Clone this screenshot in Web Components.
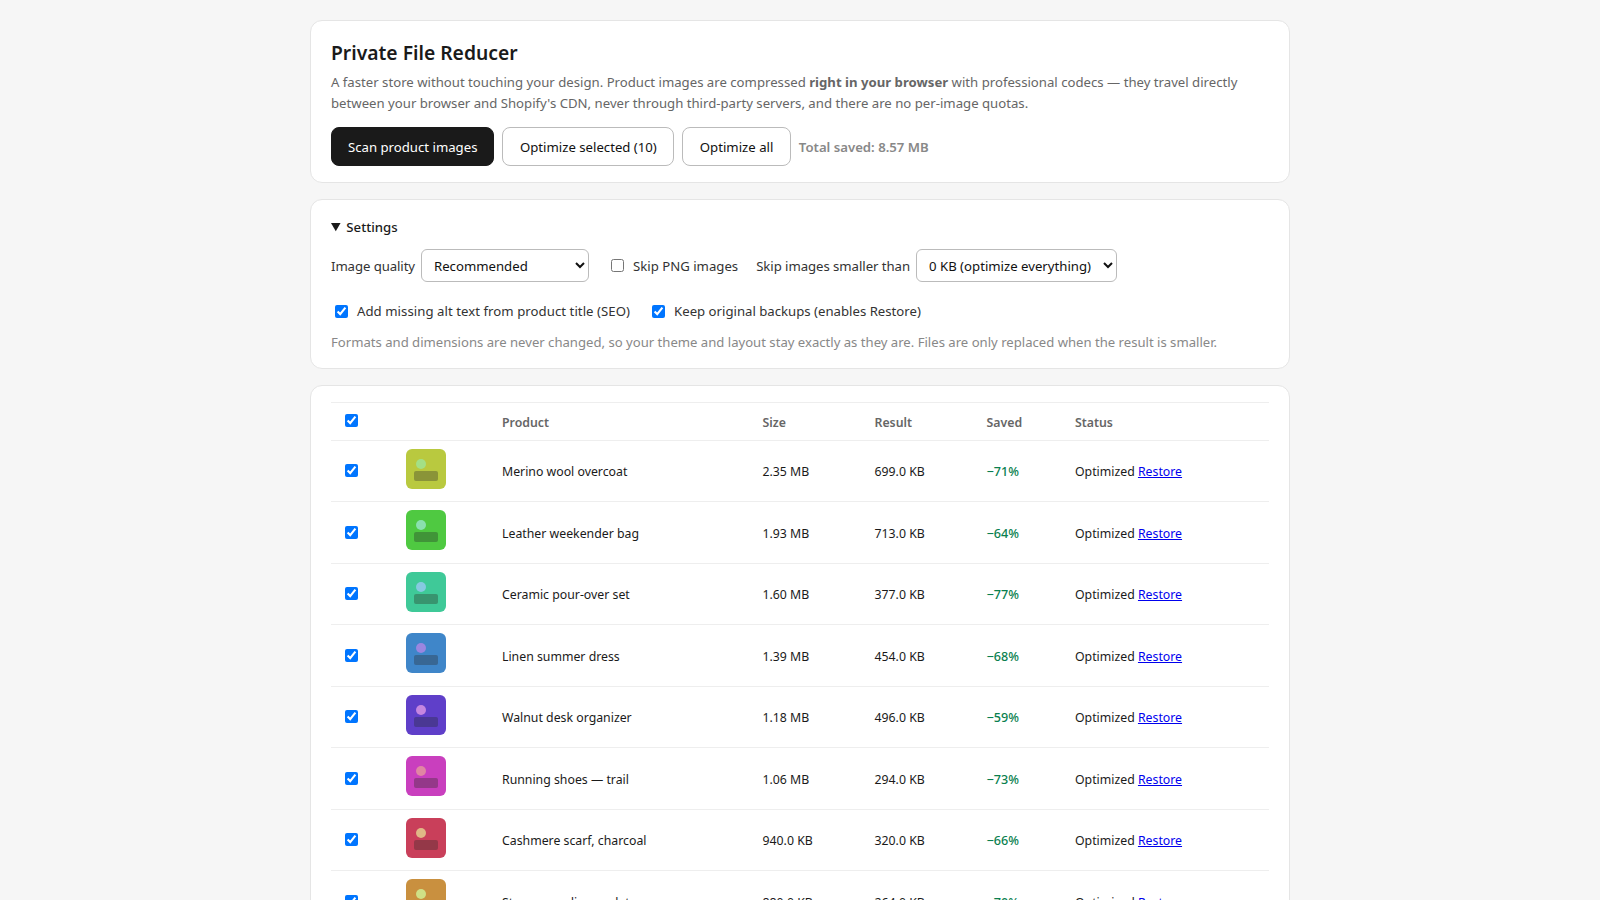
<!DOCTYPE html>
<html lang="en">
<head>
<meta charset="utf-8">
<title>Private File Reducer</title>
<style>
  html, body { margin: 0; background: #f6f6f6; }
  body {
    padding: 20px;
    color: #1a1a1a;
    font: 13.18px/21px "Noto Sans", "Open Sans", sans-serif;
  }
  main { display: block; width: 980px; margin: 0 auto; }
</style>
</head>
<body>
<main>
  <app-card>
    <h-title>Private File Reducer</h-title>
    <intro-text>A faster store without touching your design. Product images are compressed <b>right in your browser</b> with professional codecs — they travel directly between your browser and Shopify's CDN, never through third-party servers, and there are no per-image quotas.</intro-text>
    <action-bar>
      <ui-button variant="primary">Scan product images</ui-button>
      <ui-button>Optimize selected (10)</ui-button>
      <ui-button>Optimize all</ui-button>
      <total-saved>Total saved: 8.57 MB</total-saved>
    </action-bar>
  </app-card>

  <app-card>
    <settings-panel></settings-panel>
  </app-card>

  <app-card>
    <table-head></table-head>
    <product-row name="Merino wool overcoat" size="2.35 MB" result="699.0 KB" saved="−71%" bg="#b9c93f" dot="#a3e086" bar="#8a9438"></product-row>
    <product-row name="Leather weekender bag" size="1.93 MB" result="713.0 KB" saved="−64%" bg="#4fc941" dot="#8ae0ae" bar="#409438"></product-row>
    <product-row name="Ceramic pour-over set" size="1.60 MB" result="377.0 KB" saved="−77%" bg="#3fc998" dot="#86c9e0" bar="#38946f"></product-row>
    <product-row name="Linen summer dress" size="1.39 MB" result="454.0 KB" saved="−68%" bg="#3f86c9" dot="#9a86e0" bar="#386794"></product-row>
    <product-row name="Walnut desk organizer" size="1.18 MB" result="496.0 KB" saved="−59%" bg="#5f3fc9" dot="#c686e0" bar="#4a3894"></product-row>
    <product-row name="Running shoes — trail" size="1.06 MB" result="294.0 KB" saved="−73%" bg="#c93fbe" dot="#e086a3" bar="#943889"></product-row>
    <product-row name="Cashmere scarf, charcoal" size="940.0 KB" result="320.0 KB" saved="−66%" bg="#c93f5a" dot="#e0b886" bar="#943848"></product-row>
    <product-row name="Stoneware dinner plates" size="880.0 KB" result="264.0 KB" saved="−70%" bg="#c9903f" dot="#cfe086" bar="#946d38"></product-row>
  </app-card>
</main>

<script>
// small helper, every element below is a shadow root plus a style block
function shadow(el, html) {
  el.attachShadow({ mode: 'open' });
  el.shadowRoot.innerHTML = html;
}

class AppCard extends HTMLElement {
  constructor() {
    super();
    shadow(this, `
      <style>
        :host {
          display: block;
          background: #fff;
          border: 1px solid #e5e5e5;
          border-radius: 12px;
          padding: 16px 20px;
          margin-bottom: 16px;
        }
      </style>
      <slot></slot>`);
  }
}

class HTitle extends HTMLElement {
  constructor() {
    super();
    shadow(this, `
      <style>
        :host { display: block; font-size: 19.3px; line-height: 32px; font-weight: 600; margin-bottom: 3px; }
      </style>
      <slot></slot>`);
  }
}

class IntroText extends HTMLElement {
  constructor() {
    super();
    shadow(this, `
      <style>
        :host { display: block; color: #666; margin-bottom: 13px; }
      </style>
      <slot></slot>`);
  }
}

class ActionBar extends HTMLElement {
  constructor() {
    super();
    shadow(this, `
      <style>
        :host { display: flex; align-items: center; gap: 8px; }
      </style>
      <slot></slot>`);
  }
}

class UiButton extends HTMLElement {
  constructor() {
    super();
    shadow(this, `
      <style>
        :host { display: block; }
        button {
          font: inherit;
          height: 39px;
          padding: 2px 16.5px 0;
          border: 1px solid #bbb;
          border-radius: 8px;
          background: #fff;
          color: #111;
        }
        :host([variant="primary"]) button {
          padding: 2px 16px 0;
          background: #1a1a1a;
          border-color: #1a1a1a;
          color: #fff;
        }
      </style>
      <button><slot></slot></button>`);
  }
}

class TotalSaved extends HTMLElement {
  constructor() {
    super();
    shadow(this, `
      <style>
        :host { display: block; color: #888; font-weight: 600; padding-top: 2px; }
      </style>
      <slot></slot>`);
  }
}

class SettingsPanel extends HTMLElement {
  constructor() {
    super();
    shadow(this, `
      <style>
        :host { display: block; }
        summary { font-weight: 500; cursor: pointer; height: 22px; line-height: 20px; margin-bottom: 11px; }
        summary::marker { font-size: 14.5px; }
        .row { display: flex; align-items: center; gap: 18px; }
        .row + .row { margin-top: 19px; }
        label { display: inline-flex; align-items: center; gap: 6px; color: #333; }
        label span { padding-top: 2px; }
        label span.tight { letter-spacing: -0.05px; }
        label span.tighter { letter-spacing: -0.08px; }
        label span.wide { letter-spacing: 0.05px; }
        .row + .row span { padding-top: 0; }
        select {
          font: inherit;
          height: 33px;
          padding: 0 8px;
          border: 1px solid #bbb;
          border-radius: 6px;
          background: #fff;
          color: #111;
        }
        input { width: 13px; height: 13px; margin: 3px 3px 3px 4px; accent-color: #0075ff; }
        p { color: #888; margin: 10px 0 -1px; font-size: 13.12px; }
      </style>
      <details open>
        <summary>Settings</summary>
        <div class="row">
          <label><span class="tighter">Image quality</span>
            <select style="width:168px"><option>Recommended</option></select>
          </label>
          <label><input type="checkbox"> <span>Skip PNG images</span></label>
          <label><span class="tight">Skip images smaller than</span>
            <select style="width:201px"><option>0 KB (optimize everything)</option></select>
          </label>
        </div>
        <div class="row">
          <label><input type="checkbox" checked> <span class="wide">Add missing alt text from product title (SEO)</span></label>
          <label><input type="checkbox" checked> <span>Keep original backups (enables Restore)</span></label>
        </div>
        <p>Formats and dimensions are never changed, so your theme and layout stay exactly as they are. Files are only replaced when the result is smaller.</p>
      </details>`);
  }
}

const COLUMNS = '65px 96px 260.5px 112px 112px 88.5px 1fr';

class TableHead extends HTMLElement {
  constructor() {
    super();
    shadow(this, `
      <style>
        :host {
          display: grid;
          grid-template-columns: ${COLUMNS};
          align-items: center;
          height: 38.5px;
          box-sizing: border-box;
          border-top: 1px solid #eee;
          border-bottom: 1px solid #eee;
          font-size: 12.3px;
          font-weight: 600;
          color: #666;
        }
        .cell { padding: 2px 10px 0; }
        .cell:first-child { padding-top: 0; }
        input { display: block; width: 13px; height: 13px; margin: 0 0 4px 4px; accent-color: #0075ff; }
      </style>
      <div class="cell"><input type="checkbox" checked></div>
      <div class="cell"></div>
      <div class="cell">Product</div>
      <div class="cell">Size</div>
      <div class="cell">Result</div>
      <div class="cell">Saved</div>
      <div class="cell">Status</div>`);
  }
}

class ProductRow extends HTMLElement {
  constructor() {
    super();
    const a = (n) => this.getAttribute(n);
    shadow(this, `
      <style>
        :host {
          display: grid;
          grid-template-columns: ${COLUMNS};
          align-items: center;
          height: 61.5px;
          box-sizing: border-box;
          border-bottom: 1px solid #eee;
          font-size: 12.3px;
        }
        .cell { padding: 2px 10px 0; }
        .cell:first-child { padding-top: 0; }
        input { display: block; width: 13px; height: 13px; margin: 0 0 2px 4px; accent-color: #0075ff; }
        .thumb-cell { align-self: start; padding-top: 8px; }
        .thumb {
          position: relative;
          width: 40px;
          height: 40px;
          border-radius: 6px;
          overflow: hidden;
          background: ${a('bg')};
        }
        .thumb i { position: absolute; display: block; }
        .dot { left: 10px; top: 10px; width: 10px; height: 10px; border-radius: 50%; background: ${a('dot')}; }
        .bar { left: 8px; top: 22px; width: 24px; height: 10px; border-radius: 2px; background: ${a('bar')}; }
        .saved { color: #0a7f4f; font-weight: 500; font-size: 12.6px; }
        a { color: #00e; }
      </style>
      <div class="cell"><input type="checkbox" checked></div>
      <div class="cell thumb-cell"><div class="thumb"><i class="dot"></i><i class="bar"></i></div></div>
      <div class="cell">${a('name')}</div>
      <div class="cell">${a('size')}</div>
      <div class="cell">${a('result')}</div>
      <div class="cell saved">${a('saved')}</div>
      <div class="cell">Optimized <a href="#">Restore</a></div>`);
  }
}

customElements.define('app-card', AppCard);
customElements.define('h-title', HTitle);
customElements.define('intro-text', IntroText);
customElements.define('action-bar', ActionBar);
customElements.define('ui-button', UiButton);
customElements.define('total-saved', TotalSaved);
customElements.define('settings-panel', SettingsPanel);
customElements.define('table-head', TableHead);
customElements.define('product-row', ProductRow);
</script>
</body>
</html>
